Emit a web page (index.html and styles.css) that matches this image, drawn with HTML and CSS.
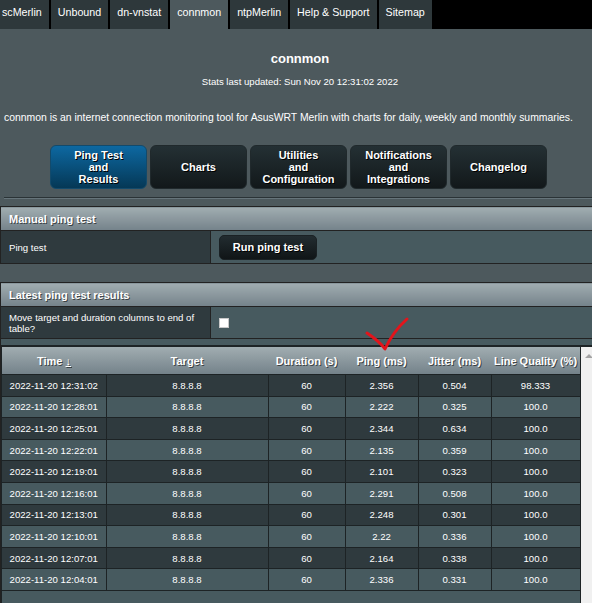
FILE: index.html
```html
<!DOCTYPE html>
<html lang="en">
<head>
    <meta charset="UTF-8">
    <meta name="viewport" content="width=device-width, initial-scale=1.0">
    <title>connmon</title>
    <link rel="stylesheet" href="styles.css">
</head>
<body>
<div class="page">
    <div class="tabs">
        <div class="tab">scMerlin</div>
        <div class="tab">Unbound</div>
        <div class="tab">dn-vnstat</div>
        <div class="tab active">connmon</div>
        <div class="tab">ntpMerlin</div>
        <div class="tab">Help &amp; Support</div>
        <div class="tab">Sitemap</div>
    </div>

    <h1 class="title">connmon</h1>
    <div class="updated">Stats last updated: Sun Nov 20 12:31:02 2022</div>
    <div class="desc">connmon is an internet connection monitoring tool for AsusWRT Merlin with charts for daily, weekly and monthly summaries.</div>

    <div class="nav">
        <div class="navbtn active">Ping Test<br>and<br>Results</div>
        <div class="navbtn">Charts</div>
        <div class="navbtn">Utilities<br>and<br>Configuration</div>
        <div class="navbtn">Notifications<br>and<br>Integrations</div>
        <div class="navbtn">Changelog</div>
    </div>
    <div class="rule"></div>

    <table class="formtable">
        <colgroup>
            <col class="label-col">
            <col>
        </colgroup>
        <thead>
            <tr><td colspan="2" class="section">Manual ping test</td></tr>
        </thead>
        <tbody>
            <tr class="ping-row">
                <th class="label">Ping test</th>
                <td class="value"><button class="btn">Run ping test</button></td>
            </tr>
        </tbody>
    </table>

    <table class="formtable second">
        <colgroup>
            <col class="label-col">
            <col>
        </colgroup>
        <thead>
            <tr><td colspan="2" class="section">Latest ping test results</td></tr>
        </thead>
        <tbody>
            <tr class="option-row">
                <th class="label">Move target and duration columns to end of table?</th>
                <td class="value"><input type="checkbox" class="check"></td>
            </tr>
            <tr>
                <td colspan="2" class="results-cell">
                    <div class="results">
                        <div class="results-body">
                            <table class="pings">
                                <colgroup>
                                    <col style="width:104px">
                                    <col style="width:162px">
                                    <col style="width:77px">
                                    <col style="width:73px">
                                    <col style="width:73px">
                                    <col style="width:89px">
                                </colgroup>
                                <thead>
                                    <tr>
                                        <th>Time <span class="sort">&darr;</span></th>
                                        <th>Target</th>
                                        <th>Duration (s)</th>
                                        <th>Ping (ms)</th>
                                        <th>Jitter (ms)</th>
                                        <th>Line Quality (%)</th>
                                    </tr>
                                </thead>
                                <tbody>
                                    <tr><td>2022-11-20 12:31:02</td><td>8.8.8.8</td><td>60</td><td>2.356</td><td>0.504</td><td>98.333</td></tr>
                                    <tr><td>2022-11-20 12:28:01</td><td>8.8.8.8</td><td>60</td><td>2.222</td><td>0.325</td><td>100.0</td></tr>
                                    <tr><td>2022-11-20 12:25:01</td><td>8.8.8.8</td><td>60</td><td>2.344</td><td>0.634</td><td>100.0</td></tr>
                                    <tr><td>2022-11-20 12:22:01</td><td>8.8.8.8</td><td>60</td><td>2.135</td><td>0.359</td><td>100.0</td></tr>
                                    <tr><td>2022-11-20 12:19:01</td><td>8.8.8.8</td><td>60</td><td>2.101</td><td>0.323</td><td>100.0</td></tr>
                                    <tr><td>2022-11-20 12:16:01</td><td>8.8.8.8</td><td>60</td><td>2.291</td><td>0.508</td><td>100.0</td></tr>
                                    <tr><td>2022-11-20 12:13:01</td><td>8.8.8.8</td><td>60</td><td>2.248</td><td>0.301</td><td>100.0</td></tr>
                                    <tr><td>2022-11-20 12:10:01</td><td>8.8.8.8</td><td>60</td><td>2.22</td><td>0.336</td><td>100.0</td></tr>
                                    <tr><td>2022-11-20 12:07:01</td><td>8.8.8.8</td><td>60</td><td>2.164</td><td>0.338</td><td>100.0</td></tr>
                                    <tr><td>2022-11-20 12:04:01</td><td>8.8.8.8</td><td>60</td><td>2.336</td><td>0.331</td><td>100.0</td></tr>
                                </tbody>
                            </table>
                        </div>
                        <div class="scrollbar"><span class="arrow"></span></div>
                    </div>
                </td>
            </tr>
        </tbody>
    </table>

    <!-- red tick drawn over the ping column -->
    <svg class="tick" width="600" height="603" viewBox="0 0 600 603">
        <path d="M367 333 C373 337 380 342 385 349 C390 338 397 328 407 319" fill="none" stroke="#e3141b" stroke-width="3" stroke-linecap="round" stroke-linejoin="round"/>
    </svg>
</div>
</body>
</html>
```

FILE: styles.css
```css
html, body {
    margin: 0;
    overflow: hidden;
}
body {
    background: #4d595d;
    color: #fff;
    font-family: "Liberation Sans", Arial, sans-serif;
    font-size: 9.6px;
}
.page {
    position: relative;
    width: 600px;
}

/* top tab strip */
.tabs {
    display: flex;
    gap: 2px;
    height: 29px;
    background: #000;
}
.tab {
    background: #2e383b;
    font-size: 10.7px;
    line-height: 13px;
    padding: 6px 7px 10px;
}
.tab:first-child {
    padding-left: 2px;
}
.tab.active {
    background: #4d595d;
}

.title {
    margin: 20px 0 0;
    font-size: 13px;
    line-height: 20px;
    font-weight: bold;
    text-align: center;
}
.updated {
    margin-top: 6px;
    line-height: 14px;
    text-align: center;
}
.desc {
    margin-top: 22px;
    font-size: 10.4px;
    line-height: 14px;
    padding-left: 4px;
}

/* page buttons */
.nav {
    display: flex;
    gap: 3px;
    margin-top: 20px;
    padding-left: 50px;
}
.navbtn {
    width: 97px;
    height: 44px;
    box-sizing: border-box;
    display: flex;
    align-items: center;
    justify-content: center;
    text-align: center;
    font-size: 11px;
    line-height: 12px;
    font-weight: bold;
    border: 1px solid #20292c;
    border-radius: 6px;
    background: linear-gradient(#243034, #12181a);
    text-shadow: 1px 1px 0 #000;
}
.navbtn.active {
    border-color: #134a6b;
    background: linear-gradient(#0d68a1, #053856);
}
.rule {
    margin: 8px 4px 0;
    border-top: 1px solid #2a3336;
    border-bottom: 1px solid #66747a;
}

/* form tables */
.formtable {
    width: 600px;
    margin-top: 7px;
    border-collapse: collapse;
    table-layout: fixed;
}
.formtable.second {
    margin-top: 18px;
}
.label-col {
    width: 210px;
}
.section {
    height: 23px;
    padding: 0 8px;
    border: 1px solid #222;
    font-size: 11px;
    font-weight: bold;
    background: linear-gradient(#a1adb1, #74828a);
    text-shadow: 1px 1px 0 rgba(0, 0, 0, 0.55);
}
.label {
    padding: 0 14px 0 8px;
    border: 1px solid #222;
    background: #2f3a3e;
    font-weight: normal;
    text-align: left;
    line-height: 11px;
}
.value {
    padding: 0 8px;
    border: 1px solid #222;
    background: #475a5f;
}
.ping-row .label, .ping-row .value {
    height: 32px;
}
.option-row .label, .option-row .value {
    height: 31px;
}
.btn {
    display: block;
    width: 98px;
    height: 25px;
    padding: 0;
    color: #fff;
    font-family: inherit;
    font-size: 11px;
    font-weight: bold;
    border: 1px solid #1a2124;
    border-radius: 5px;
    background: linear-gradient(#222c30, #101517);
    text-shadow: 1px 1px 0 #000;
}
.check {
    appearance: none;
    display: block;
    width: 10px;
    height: 10px;
    margin: 0;
    background: #fff;
    border: 1px solid #c8c8c8;
}

/* results list */
.results-cell {
    padding: 6px 0 0;
    border-left: 1px solid #222;
    background: #475a5f;
}
.results {
    display: flex;
    height: 280px;
    border-top: 2px solid #1d2325;
    border-left: 1px solid #1d2325;
}
.results-body {
    width: 578px;
    background: #475a5f;
}
.pings {
    width: 578px;
    border-collapse: collapse;
    table-layout: fixed;
    text-align: center;
}
.pings th {
    height: 27px;
    padding: 0;
    font-size: 11px;
    font-weight: bold;
    background: linear-gradient(#a1adb1, #74828a);
    text-shadow: 1px 1px 0 rgba(0, 0, 0, 0.55);
    border-bottom: 1px solid #1d2325;
}
.sort {
    font-weight: normal;
    text-decoration: underline;
}
.pings td {
    height: 20.6px;
    padding: 0;
    border: 1px solid #1d2325;
    border-left: none;
    background: #2f3a3e;
}
.pings td + td {
    border-left: 1px solid #1d2325;
}
.pings tbody tr:nth-child(even) td {
    background: #475a5f;
}
.scrollbar {
    width: 17px;
    background: #f0f0f0;
    border-left: 1px solid #1d2325;
}
.arrow {
    display: block;
    width: 0;
    height: 0;
    margin: 7px 0 0 4px;
    border-left: 4px solid transparent;
    border-right: 4px solid transparent;
    border-bottom: 4px solid #a3a3a3;
}

.tick {
    position: absolute;
    top: 0;
    left: 0;
    pointer-events: none;
}
```
